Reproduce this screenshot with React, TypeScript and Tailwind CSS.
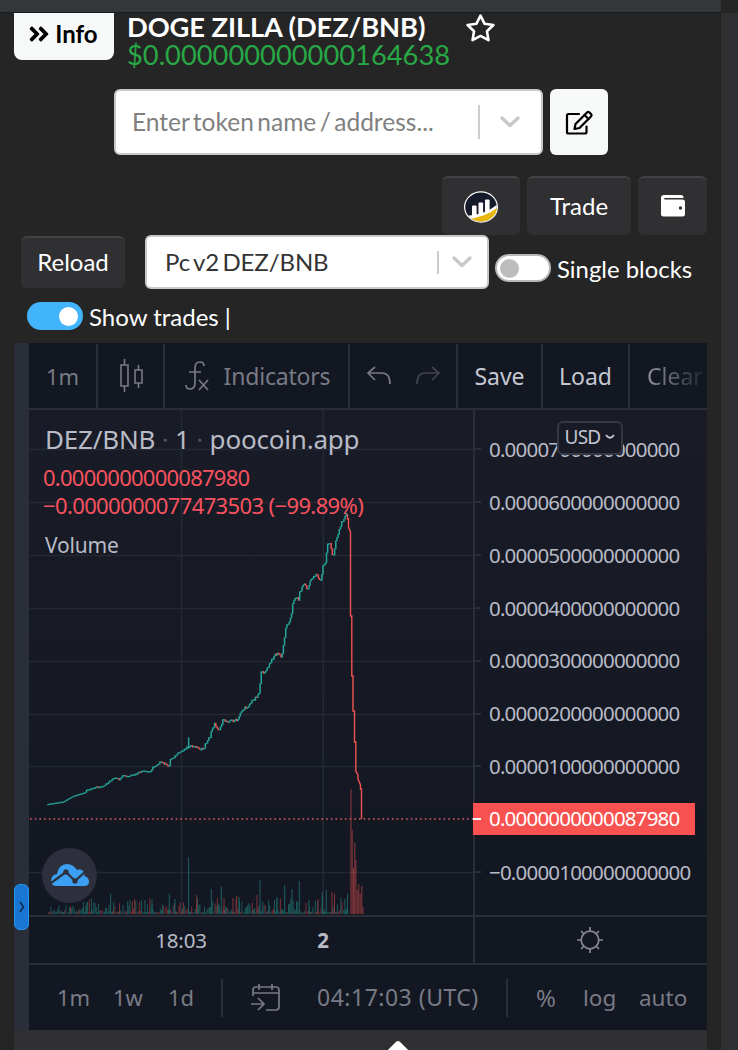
import type { ReactNode } from 'react';
import { clsx } from 'clsx';
import { FaAngleDoubleRight } from 'react-icons/fa';
import { FiStar } from 'react-icons/fi';

const TEAL = '#26a69a';
const RED = '#ef5350';

const priceLabels = [
  '0.0000700000000000',
  '0.0000600000000000',
  '0.0000500000000000',
  '0.0000400000000000',
  '0.0000300000000000',
  '0.0000200000000000',
  '0.0000100000000000',
  '0.0000000000087980',
  '−0.0000100000000000',
];

const gridRows = [449.5, 502.5, 555.5, 608.5, 661.5, 714.5, 766.5, 872.5];

// price path in chart coordinates
const pricePoints: [number, number][] = [
  [47.3, 804.7], [56, 803.3], [64, 802], [73.3, 796.7], [86, 792.7], [87.5, 790], [96.7, 787.3],
  [104, 787.3], [110.7, 780.7], [115, 778.7], [120.7, 780], [124, 775.3], [126.7, 777.3],
  [135, 775.3], [141.7, 772], [150, 772], [153.3, 768], [160, 762.7], [164, 763.3], [169.3, 767.3],
  [170.5, 760], [181.7, 751.7], [188.7, 746.5], [196.7, 747.3], [202, 750], [204, 749], [208.3, 739.3],
  [210.7, 738], [211.7, 730], [215, 724.7], [220, 730], [222.7, 721.3], [236.7, 720.7], [238, 722],
  [241, 711.7], [247.3, 707.3], [258.3, 695], [260, 691.7], [261, 674], [266.7, 671], [275, 655],
  [280, 654], [281.7, 659.3], [283.3, 650], [286, 628.3], [291.7, 616.7], [293.3, 603.3],
  [295, 597.3], [299.3, 599.3], [300, 593.3], [304.3, 583.3], [308, 590], [311.7, 579.3],
  [317.3, 573.3], [319.3, 580.7], [322, 580], [322.7, 566.7], [326, 563.3], [327.7, 543.3],
  [330.7, 545], [333.3, 558.3], [336, 541.7], [341.7, 524], [346, 514],
];

const crashPath =
  'M347.5 514V519H348.5V527L350.5 532V616H351.8V676H353V711H354.5V742H355.8V771L358 775V779L360.5 785V789H361.5V819';

const volumeSpikes: [number, number, boolean][] = [
  [87.3, 902, true], [110.6, 894, true], [134.7, 899, false], [145, 900, true], [152, 899, true],
  [169.3, 894, true], [175, 899, true], [188.6, 857.5, true], [196.7, 895, false], [211.3, 889, true],
  [221.3, 887, true], [224, 898, false], [233, 898, false], [236.7, 896, false], [239, 897, true],
  [257, 895, false], [260, 880, true], [277, 897, true], [284.7, 885, true], [292, 889, true],
  [299.3, 881, true], [309, 900, true], [318, 899, false], [322.3, 892, true], [326.3, 890, true],
  [332, 892, false], [334.5, 894, false], [345, 899, true], [347.5, 894, true],
];

const crashVolume: [number, number][] = [
  [351, 789], [352.2, 830], [353.5, 868], [354.8, 843], [356, 860], [357.4, 890], [358.8, 884],
  [360.2, 894], [361.8, 886], [363, 907],
];

const noise = (n: number) => {
  const v = Math.sin(n * 12.9898) * 43758.5453;
  return v - Math.floor(v);
};

const priceAt = (x: number) => {
  const i = pricePoints.findIndex(([px]) => px >= x);
  if (i <= 0) return pricePoints[i === 0 ? 0 : pricePoints.length - 1][1];
  const [x0, y0] = pricePoints[i - 1];
  const [x1, y1] = pricePoints[i];
  return y0 + ((y1 - y0) * (x - x0)) / (x1 - x0);
};

const candles = Array.from({ length: 257 }, (_, i) => {
  const x = 47.3 + i * 1.165;
  const shake = x > 200 ? 3.2 : x > 85 ? 2 : 0.2;
  const open = priceAt(x) + (noise(i) - 0.5) * shake;
  const close = priceAt(x + 1.165) + (noise(i + 1) - 0.5) * shake;
  return { x, top: Math.min(open, close), height: Math.max(1.3, Math.abs(open - close) + 0.6), up: close <= open + 0.6 };
});

const volumes = Array.from({ length: 258 }, (_, i) => ({
  x: 48 + i * 1.165,
  height: 1.5 + Math.pow(noise(i + 300), 3) * (i < 30 ? 8 : 15),
  up: noise(i + 900) > 0.35,
}));

const DarkButton = ({ className, children }: { className: string; children: ReactNode }) => (
  <button
    className={clsx(
      'flex items-center justify-center rounded-md border-t-2 border-[#434345] bg-[#303032] pb-[2px] text-[24px] text-white',
      className
    )}
  >
    {children}
  </button>
);

const SelectChevron = () => (
  <svg viewBox="0 0 22 14" className="h-[14px] w-[22px]" fill="none" stroke="#c8c8c8" strokeWidth="3.4" strokeLinecap="round" strokeLinejoin="round">
    <path d="M3 3l8 7.5L19 3" />
  </svg>
);

const EditIcon = () => (
  <svg viewBox="0 0 28 26" className="mt-px h-[26px] w-[28px]" fill="none" stroke="#000" strokeWidth="2.200" strokeLinejoin="round" strokeLinecap="round">
    <path d="M14 4H3.5Q2 4 2 5.5V22Q2 23.5 3.5 23.5H20Q21.500 23.500 21.500 22V16.500" />
    <path d="M9.500 19L10.500 14L22 2.500Q23.200 1.400 24.500 2.500L26 4Q27 5.200 26 6.400L14.500 18Z" />
    <path d="M19.500 5L23.500 9" />
  </svg>
);

const WalletIcon = () => (
  <svg viewBox="0 0 26 24" className="h-[24px] w-[26px]">
    <path d="M4 1H21Q23.500 1 23.500 3V4H5Q4 4 4 4.700T5 5.400H22.500Q25 5.400 25 8V20Q25 22.500 22.500 22.500H3.500Q1 22.500 1 20V4Q1 1 4 1Z" fill="#fff" />
    <circle cx="20.500" cy="14" r="1.700" fill="#303032" />
  </svg>
);

const PooLogo = () => (
  <svg viewBox="0 0 36 34" className="mt-[2px] h-[34px] w-[36px]">
    <clipPath id="coin">
      <ellipse cx="18" cy="17" rx="15.800" ry="14.500" />
    </clipPath>
    <ellipse cx="18" cy="17" rx="17" ry="15.700" fill="#fff" />
    <g clipPath="url(#coin)">
      <rect width="36" height="34" fill="#161b2c" />
      <path d="M0 26Q22 26 36 13V34H0Z" fill="#fff" />
      <path d="M4 29Q25 27 36 16V36H4Z" fill="#e8b70c" />
    </g>
    <rect x="9" y="15.500" width="4.600" height="12" rx="1" fill="#fff" />
    <rect x="15.500" y="12.500" width="4.600" height="13" rx="1" fill="#fff" />
    <rect x="22" y="9.500" width="4.600" height="13" rx="1" fill="#fff" />
  </svg>
);

const Header = () => (
  <header>
    <div className="h-[13px] border-b border-[#191919] bg-[#33373a]" />
    <div className="flex h-[76px] pl-[14px]">
      <button className="flex h-[47px] w-[100px] items-center justify-center gap-[5px] rounded-b-lg bg-[#f7f9f9] pr-[2px] pb-[5px] text-[24px] font-bold text-black">
        <FaAngleDoubleRight className="h-[24px] w-[22px]" />
        Info
      </button>
      <div className="ml-[13px] whitespace-nowrap">
        <h1 className="h-[28px] text-[27.300px] leading-[28px] font-bold tracking-[-0.1px] text-white">DOGE ZILLA (DEZ/BNB)</h1>
        <p className="text-[27.300px] leading-[28px] text-[#28a745]">$0.000000000000164638</p>
      </div>
      <FiStar className="ml-[15px] size-[31px] text-white" />
    </div>
    <div className="flex gap-[7px] pl-[114px]">
      <div className="flex h-[66px] w-[429px] items-center rounded-md border-2 border-[#c8c8c8] bg-white pl-[16px] text-[24.500px] text-[#808080]">
        <span className="w-[346px] [word-spacing:-2.800px]">Enter token name / address...</span>
        <span className="h-[34px] w-[2px] bg-[#ccc]" />
        <span className="ml-[19px]">
          <SelectChevron />
        </span>
      </div>
      <button className="flex h-[66px] w-[58px] items-center justify-center rounded-md bg-[#f7f9f9]">
        <EditIcon />
      </button>
    </div>
  </header>
);

const Controls = () => (
  <div className="pt-[21px]">
    <div className="flex gap-[7px] pl-[442px]">
      <DarkButton className="h-[59px] w-[78px]">
        <PooLogo />
      </DarkButton>
      <DarkButton className="h-[59px] w-[104px]">Trade</DarkButton>
      <DarkButton className="h-[59px] w-[69px]">
        <WalletIcon />
      </DarkButton>
    </div>
    <div className="flex items-center pl-[21px] text-[24px]">
      <DarkButton className="h-[52px] w-[104px]">Reload</DarkButton>
      <div className="ml-[20px] flex h-[54px] w-[344px] items-center rounded-md border-2 border-[#c8c8c8] bg-white pl-[18px] text-[#333]">
        <span className="w-[272px] tracking-[-0.100px] [word-spacing:-2.600px]">Pc v2 DEZ/BNB</span>
        <span className="h-[23px] w-[2px] bg-[#ccc]" />
        <span className="ml-[12px]">
          <SelectChevron />
        </span>
      </div>
      <span className="mt-[12px] ml-[6px] flex h-[28px] w-[56px] items-center rounded-full border-2 border-[#b9b9b9] bg-white pl-[3px]">
        <span className="size-[19px] rounded-full bg-[#bdbdbd]" />
      </span>
      <span className="mt-[14px] ml-[6px] text-[23.900px] whitespace-nowrap text-white">Single blocks</span>
    </div>
    <div className="flex h-[54px] items-start pt-[13px] pl-[27px] text-[24px] text-white">
      <span className="flex h-[28px] w-[56px] items-center justify-end rounded-full bg-[#42b4fb] pr-[5px]">
        <span className="size-[19px] rounded-full bg-white" />
      </span>
      <span className="ml-[6px] leading-[30px]">Show trades |</span>
    </div>
  </div>
);

const Tool = ({ className, children }: { className: string; children?: ReactNode }) => (
  <div className={clsx('flex h-full shrink-0 items-center justify-center border-r-2 border-[#2a2e39]', className)}>{children}</div>
);

const Toolbar = () => (
  <div className="flex h-[67px] overflow-hidden border-b-2 border-[#2a2e39] bg-[#131722] pt-px text-[23px] text-[#787b86]">
    <Tool className="w-[69px] text-[22px]">1m</Tool>
    <Tool className="w-[67px]">
      <svg viewBox="0 0 26 36" className="ml-[2px] h-[36px] w-[26px]" fill="none" stroke="currentColor" strokeWidth="1.600">
        <path d="M2 7H9V28H2ZM5.500 1V7M5.500 28V34M16 12H23V25H16ZM19.500 7V12M19.500 25V30" />
      </svg>
    </Tool>
    <Tool className="w-[185px] gap-[14px]">
      <svg viewBox="0 0 26 32" className="h-[32px] w-[26px]" fill="none" stroke="currentColor" strokeWidth="1.700">
        <path d="M20 6Q20 2 16 2Q11 2 11 8V23Q11 29 6 29Q2 29 2 25M5 12H17M15 20L24 30M24 20L15 30" />
      </svg>
      <span className="-mr-px tracking-[-0.200px]">Indicators</span>
    </Tool>
    <Tool className="w-[108px] gap-[25px]">
      <svg viewBox="0 0 24 20" className="h-[20px] w-[24px]" fill="none" stroke="currentColor" strokeWidth="1.700">
        <path d="M8 1L1 7L8 14M1 7H15Q23 7 23 18" />
      </svg>
      <svg viewBox="0 0 24 20" className="h-[20px] w-[24px] opacity-45" fill="none" stroke="currentColor" strokeWidth="1.700">
        <path d="M16 1L23 7L16 14M23 7H9Q1 7 1 18" />
      </svg>
    </Tool>
    <Tool className="w-[85px] text-[#c5c8d1]">Save</Tool>
    <Tool className="w-[87px] text-[#c5c8d1]">Load</Tool>
    <div className="flex w-[77px] items-center overflow-hidden bg-gradient-to-r from-[#9598a1] from-20% to-[#242834] to-95% bg-clip-text pl-[17px] text-transparent">
      Clear
    </div>
  </div>
);

const ChartPane = () => (
  <div className="relative h-[505px] w-[444px]">
    <svg viewBox="29 410 444 505" className="block h-[505px] w-[444px]">
      <g stroke="#242833" strokeWidth="1.600">
        {gridRows.map((y) => (
          <line key={y} x1="29" x2="473" y1={y} y2={y} />
        ))}
        <line x1="181.500" x2="181.500" y1="410" y2="916" />
        <line x1="323.300" x2="323.300" y1="410" y2="916" />
      </g>
      <g opacity="0.5">
        {volumes.map((bar) => (
          <rect key={bar.x} x={bar.x} y={914 - bar.height} width="0.9" height={bar.height} fill={bar.up ? TEAL : RED} />
        ))}
        {volumeSpikes.map(([x, y, up]) => (
          <rect key={x} x={x - 0.5} y={y} width="1" height={914 - y} fill={up ? TEAL : RED} />
        ))}
        {crashVolume.map(([x, y]) => (
          <rect key={x} x={x - 0.6} y={y} width="1.100" height={914 - y} fill={RED} />
        ))}
      </g>
      <rect x="187.900" y="737.500" width="1.400" height="11" fill={TEAL} />
      {candles.map((c) => (
        <rect key={c.x} x={c.x} y={c.top - 0.6} width="1.500" height={c.height} fill={c.up ? TEAL : RED} />
      ))}
      <path d={crashPath} fill="none" stroke={RED} strokeWidth="1.400" />
      <line x1="30" x2="473" y1="819" y2="819" stroke="#e05a62" strokeWidth="1.600" strokeDasharray="1.600 3.100" />
    </svg>
    <div className="absolute top-[12px] left-[16px] whitespace-nowrap">
      <h2 className="text-[26px] leading-[34px] tracking-[-0.200px] text-[#b8bbc6]">
        DEZ/BNB <span className="text-[#50535e]">·</span> 1 <span className="text-[#50535e]">·</span> poocoin.app
      </h2>
      <p className="mt-[7px] -ml-[2px] text-[22px] leading-[28px] tracking-[-0.750px] text-[#f7525f]">0.0000000000087980</p>
      <p className="-ml-[2px] text-[22px] leading-[28px] tracking-[-0.630px] text-[#f7525f]">−0.0000000077473503 (−99.89%)</p>
      <p className="mt-[12px] text-[21px] leading-[28px] tracking-[-0.200px] text-[#b8bbc6]">Volume</p>
    </div>
    <div className="absolute top-[438px] left-[13px] flex size-[55px] items-center justify-center rounded-full bg-[#2d2f3c]">
      <svg viewBox="0 0 40 24" className="-mt-[2px] h-[24px] w-[40px]">
        <path d="M7 23Q1 23 1 18Q1 12 7 11Q9 1 17 1Q23 1 27 7Q31 5 34 9Q35 13 34 13Q39 14 39 19Q39 23 34 23Z" fill="#3ba0f3" />
        <path d="M1 20L16 9L25 18L36 8" fill="none" stroke="#2d2f3c" strokeWidth="2.200" />
        <circle cx="16" cy="9" r="2.700" fill="#2d2f3c" />
        <circle cx="25" cy="18" r="2.700" fill="#2d2f3c" />
      </svg>
    </div>
  </div>
);

const PriceAxis = () => (
  <div className="relative w-[234px] border-l-2 border-[#2a2e39] pt-[13px] text-[20.500px] tracking-[-0.8px] text-[#b8bbc6]">
    {priceLabels.map((label, i) => (
      <div key={label} className="flex h-[52.850px] items-center">
        {i === 7 ? (
          <div className="-ml-[2px] flex h-[32px] w-[222px] items-center gap-[8px] bg-[#f7524f] pb-px text-white">
            <span className="h-[2px] w-[8px] bg-white" />
            {label}
          </div>
        ) : (
          <>
            <span className="mr-[8px] h-[2px] w-[6px] bg-[#2a2e39]" />
            {label}
          </>
        )}
      </div>
    ))}
    <button className="absolute top-[11px] left-[82px] flex h-[34px] w-[66px] items-center justify-center gap-[5px] rounded-md border-2 border-[#343843] bg-[#181b26] pb-[2px] text-[19px] text-[#c5c8d1]">
      USD
      <svg viewBox="0 0 10 6" className="h-[6px] w-[10px]" fill="none" stroke="currentColor" strokeWidth="1.800">
        <path d="M1 1Q5 6.500 9 1" />
      </svg>
    </button>
  </div>
);

const TimeAxis = () => (
  <div className="flex h-[50px] border-y-2 border-[#2a2e39] text-[20.500px] text-[#b8bbc6]">
    <div className="flex w-[444px] items-center pt-px">
      <span className="ml-[117px] w-[70px] text-center tracking-[-0.200px]">18:03</span>
      <span className="ml-[72px] w-[70px] text-center font-bold">2</span>
    </div>
    <div className="flex w-[234px] items-center justify-center border-l-2 border-[#2a2e39] pr-[2px]">
      <svg viewBox="0 0 28 28" className="size-[28px]" fill="none" stroke="#868993" strokeWidth="1.700">
        <circle cx="14" cy="14" r="8.800" />
        <path d="M14 1V5M14 23V27M1 14H5M23 14H27M5 5L8 8M20 20L23 23M5 23L8 20M20 8L23 5" />
      </svg>
    </div>
  </div>
);

const BottomBar = () => (
  <div className="flex h-[65px] items-center whitespace-nowrap text-[23px] text-[#787b86]">
    <span className="ml-[28px] w-[56px] text-[22px]">1m</span>
    <span className="w-[55px] text-[22px]">1w</span>
    <span className="w-[53px] text-[22px]">1d</span>
    <span className="h-[38px] w-[2px] bg-[#2a2e39]" />
    <svg viewBox="0 0 30 28" className="ml-[27px] h-[28px] w-[30px]" fill="none" stroke="currentColor" strokeWidth="1.700">
      <path d="M3 12V6Q3 3 6 3H26Q29 3 29 6V23Q29 26 26 26H16M3 9H29M9 0V6M22 0V6M1 20H13M8 14L14 20L8 26" />
    </svg>
    <span className="ml-[37px] w-[189px] tracking-[0.500px]">04:17:03 (UTC)</span>
    <span className="h-[38px] w-[2px] bg-[#2a2e39]" />
    <span className="ml-[28px] w-[47px] text-[24px]">%</span>
    <span className="w-[56px] text-[22.500px]">log</span>
    <span className="text-[22.500px]">auto</span>
  </div>
);

const App = () => (
  <div className="flex h-[1050px] w-[738px] overflow-hidden bg-[#252525] font-['Lato',sans-serif]">
    <div className="w-[721px] shrink-0">
      <Header />
      <Controls />
      <div className="ml-[14px] flex h-[687px] w-[693px] font-['Noto_Sans',sans-serif]">
        <div className="w-[15px] shrink-0 bg-[#2a2e39] pt-[541px]">
          <div className="flex h-[46px] w-[15px] items-center justify-center rounded-[6px] border border-[#2196f3] bg-[#1976d2]">
            <svg viewBox="0 0 6 12" className="h-[12px] w-[6px]" fill="none" stroke="#0d2a4d" strokeWidth="1.600">
              <path d="M1 1L4.500 6L1 11" />
            </svg>
          </div>
        </div>
        <div className="w-[678px] bg-[#131722]">
          <Toolbar />
          <div className="flex h-[505px] bg-gradient-to-b from-[#191c27] to-[#131722]">
            <ChartPane />
            <PriceAxis />
          </div>
          <TimeAxis />
          <BottomBar />
        </div>
      </div>
      <div className="ml-[14px] flex h-[20px] w-[693px] justify-center overflow-hidden bg-[#303032] pt-[14px] pl-[75px]">
        <span className="size-[20px] shrink-0 rotate-45 rounded-[3px] bg-white" />
      </div>
    </div>
    <div className="mt-[13px] w-[17px] bg-[#303033]" />
  </div>
);

export default App;
